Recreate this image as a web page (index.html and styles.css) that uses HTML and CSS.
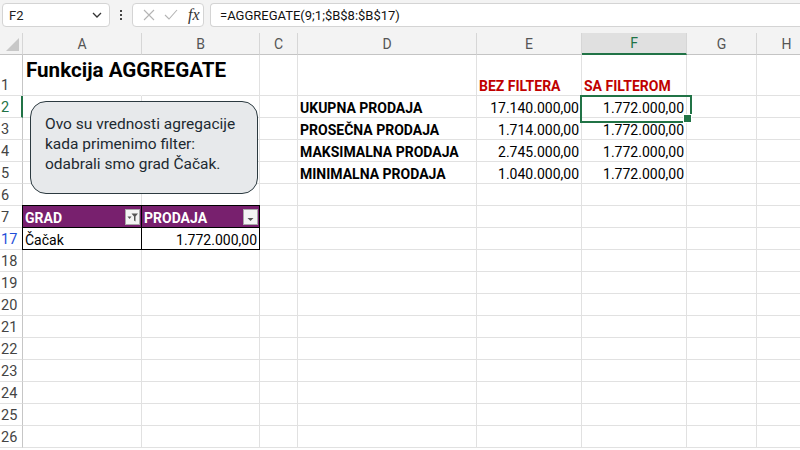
FILE: index.html
```html
<!DOCTYPE html>
<html lang="sr">
<head>
<meta charset="utf-8">
<title>Funkcija AGGREGATE</title>
<link rel="stylesheet" href="styles.css">
</head>
<body>
<div class="app">
  <div class="fbar">
    <div class="namebox"><span>F2</span>
      <svg class="chev" width="10" height="6" viewBox="0 0 10 6"><polyline points="1,1 5,5 9,1" fill="none" stroke="#333" stroke-width="1.3"/></svg>
    </div>
    <div class="dots"><i></i><i></i><i></i></div>
    <div class="fxbox">
      <svg width="12" height="12" viewBox="0 0 12 12"><path d="M1 1L11 11M11 1L1 11" stroke="#b4b4b4" stroke-width="1.1" fill="none"/></svg>
      <svg width="14" height="12" viewBox="0 0 14 12"><polyline points="1,6 5,10 13,1" fill="none" stroke="#b4b4b4" stroke-width="1.1"/></svg>
      <span class="fx">fx</span>
    </div>
    <div class="formula">=AGGREGATE(9;1;$B$8:$B$17)</div>
  </div>

  <div class="sheet">
    <div class="row hdr">
      <div class="c rh corner"><span class="tri"></span></div>
      <div class="c">A</div><div class="c">B</div><div class="c">C</div><div class="c">D</div>
      <div class="c">E</div><div class="c selcol">F</div><div class="c">G</div><div class="c">H</div>
    </div>
    <div class="row r1">
      <div class="c rh">1</div>
      <div class="c title nob">Funkcija AGGREGATE</div><div class="c"></div><div class="c"></div><div class="c"></div>
      <div class="c red">BEZ FILTERA</div><div class="c red">SA FILTEROM</div><div class="c"></div><div class="c"></div>
    </div>
    <div class="row">
      <div class="c rh selrow">2</div>
      <div class="c"></div><div class="c"></div><div class="c"></div>
      <div class="c b">UKUPNA PRODAJA</div><div class="c n">17.140.000,00</div><div class="c n sel">1.772.000,00</div><div class="c"></div><div class="c"></div>
    </div>
    <div class="row">
      <div class="c rh">3</div>
      <div class="c"></div><div class="c"></div><div class="c"></div>
      <div class="c b">PROSEČNA PRODAJA</div><div class="c n">1.714.000,00</div><div class="c n">1.772.000,00</div><div class="c"></div><div class="c"></div>
    </div>
    <div class="row">
      <div class="c rh">4</div>
      <div class="c"></div><div class="c"></div><div class="c"></div>
      <div class="c b">MAKSIMALNA PRODAJA</div><div class="c n">2.745.000,00</div><div class="c n">1.772.000,00</div><div class="c"></div><div class="c"></div>
    </div>
    <div class="row">
      <div class="c rh">5</div>
      <div class="c"></div><div class="c"></div><div class="c"></div>
      <div class="c b">MINIMALNA PRODAJA</div><div class="c n">1.040.000,00</div><div class="c n">1.772.000,00</div><div class="c"></div><div class="c"></div>
    </div>
    <div class="row">
      <div class="c rh">6</div>
      <div class="c"></div><div class="c"></div><div class="c"></div><div class="c"></div><div class="c"></div><div class="c"></div><div class="c"></div><div class="c"></div>
    </div>
    <div class="row">
      <div class="c rh">7</div>
      <div class="c th tl tt">GRAD
        <span class="fbtn"><svg width="13" height="14" viewBox="0 0 13 14"><path d="M1.5 6.5h4l-2 2.5z" fill="#555"/><path d="M5.5 3.5h6.5l-2.5 3v5l-1.5-1v-4z" fill="#555"/></svg></span>
      </div>
      <div class="c th tt">PRODAJA
        <span class="fbtn"><svg width="13" height="14" viewBox="0 0 13 14"><path d="M3.5 8h6l-3 3z" fill="#555"/></svg></span>
      </div>
      <div class="c"></div><div class="c"></div><div class="c"></div><div class="c"></div><div class="c"></div><div class="c"></div>
    </div>
    <div class="row">
      <div class="c rh blue">17</div>
      <div class="c td tl">Čačak</div><div class="c td n">1.772.000,00</div>
      <div class="c"></div><div class="c"></div><div class="c"></div><div class="c"></div><div class="c"></div><div class="c"></div>
    </div>
    <div class="row"><div class="c rh">18</div><div class="c"></div><div class="c"></div><div class="c"></div><div class="c"></div><div class="c"></div><div class="c"></div><div class="c"></div><div class="c"></div></div>
    <div class="row"><div class="c rh">19</div><div class="c"></div><div class="c"></div><div class="c"></div><div class="c"></div><div class="c"></div><div class="c"></div><div class="c"></div><div class="c"></div></div>
    <div class="row"><div class="c rh">20</div><div class="c"></div><div class="c"></div><div class="c"></div><div class="c"></div><div class="c"></div><div class="c"></div><div class="c"></div><div class="c"></div></div>
    <div class="row"><div class="c rh">21</div><div class="c"></div><div class="c"></div><div class="c"></div><div class="c"></div><div class="c"></div><div class="c"></div><div class="c"></div><div class="c"></div></div>
    <div class="row"><div class="c rh">22</div><div class="c"></div><div class="c"></div><div class="c"></div><div class="c"></div><div class="c"></div><div class="c"></div><div class="c"></div><div class="c"></div></div>
    <div class="row"><div class="c rh">23</div><div class="c"></div><div class="c"></div><div class="c"></div><div class="c"></div><div class="c"></div><div class="c"></div><div class="c"></div><div class="c"></div></div>
    <div class="row"><div class="c rh">24</div><div class="c"></div><div class="c"></div><div class="c"></div><div class="c"></div><div class="c"></div><div class="c"></div><div class="c"></div><div class="c"></div></div>
    <div class="row"><div class="c rh">25</div><div class="c"></div><div class="c"></div><div class="c"></div><div class="c"></div><div class="c"></div><div class="c"></div><div class="c"></div><div class="c"></div></div>
    <div class="row"><div class="c rh">26</div><div class="c"></div><div class="c"></div><div class="c"></div><div class="c"></div><div class="c"></div><div class="c"></div><div class="c"></div><div class="c"></div></div>
  </div>

  <div class="callout">Ovo su vrednosti agregacije kada primenimo filter: odabrali smo grad Čačak.</div>
</div>
</body>
</html>
```

FILE: styles.css
```css
* { box-sizing: border-box; margin: 0; padding: 0; }
html, body { width: 800px; height: 450px; overflow: hidden; background: #fff; }
body { font-family: Roboto, "Liberation Sans", sans-serif; color: #000; }

.app { position: relative; width: 800px; height: 450px; overflow: hidden; }

/* formula bar */
.fbar {
  height: 33px; background: #f3f3f3;
  display: flex; align-items: flex-start;
  padding: 3px 0 0 2px;
}
.namebox {
  width: 108px; height: 24px; background: #fff;
  border: 1px solid #d4d4d4; border-radius: 4px;
  display: flex; align-items: center; justify-content: space-between;
  padding: 0 7px 0 6px; font-size: 13px; color: #222;
}
.dots {
  width: 22px; height: 24px;
  display: flex; flex-direction: column; align-items: center; justify-content: center; gap: 2px;
}
.dots i { display: block; width: 2px; height: 2px; background: #444; }
.fxbox {
  width: 72px; height: 24px; background: #fff;
  border: 1px solid #d4d4d4; border-radius: 4px;
  display: flex; align-items: center; gap: 9px; padding-left: 10px;
}
.fx { font-family: "Liberation Serif", serif; font-style: italic; font-size: 16px; color: #333; margin-left: 1px; }
.formula {
  flex: 1; height: 24px; margin-left: 6px; background: #fff;
  border: 1px solid #d4d4d4; border-right: none; border-radius: 4px 0 0 4px;
  padding-left: 9px; font-size: 13px; color: #111;
  display: flex; align-items: center;
}

/* sheet */
.row {
  display: grid;
  grid-template-columns: 23px 119px 118px 38px 179px 105px 105px 70px 60px;
  height: 22px;
}
.row.r1 { height: 41px; }
.c {
  border-right: 1px solid #e1e1e1; border-bottom: 1px solid #e1e1e1;
  padding: 0 2px 1px 2px;
  display: flex; align-items: flex-end;
  font-size: 14px; white-space: nowrap; min-width: 0;
}
.hdr { height: 22px; background: #f3f3f3; }
.hdr .c {
  justify-content: center; align-items: center; padding: 0;
  color: #555; font-size: 14px;
  border-right-color: #d6d6d6; border-bottom-color: #c4c4c4;
}
.hdr .selcol { background: #e0e0e0; color: #217346; border-bottom: 2px solid #217346; }
.corner { position: relative; }
.tri {
  position: absolute; right: 3px; bottom: 3px;
  width: 0; height: 0;
  border-left: 13px solid transparent; border-bottom: 13px solid #c8c8c8;
}
.rh { color: #444; border-right-color: #c6c6c6; padding-left: 1px; font-size: 14.5px; }
.rh.selrow { color: #217346; border-right: 2px solid #217346; }
.rh.blue { color: #1f4fd8; }

.nob { border-right-color: transparent; }
.title { font-weight: 700; font-size: 20.6px; align-items: flex-start; padding: 3px 0 0 3px; overflow: visible; }
.red { color: #c00000; font-weight: 700; }
.b { font-weight: 700; }
.n { justify-content: flex-end; }

.sel { position: relative; }
.sel::before {
  content: ""; position: absolute; left: -2px; top: -1px;
  width: 108px; height: 24px; border: 2px solid #217346;
}
.sel::after {
  content: ""; position: absolute; left: 101px; top: 18px;
  width: 7px; height: 7px; background: #217346; border: 1px solid #fff;
}

/* table */
.th {
  background: #78206e; color: #fff; font-weight: 700;
  justify-content: space-between;
  border-right-color: #000; border-bottom-color: #000;
  padding-right: 1px;
}
.td { border-right-color: #000; border-bottom-color: #000; }
.tl { box-shadow: -1px 0 0 #000; }
.tt { box-shadow: 0 -1px 0 #000; }
.tl.tt { box-shadow: -1px 0 0 #000, 0 -1px 0 #000, -1px -1px 0 #000; }
.fbtn {
  width: 15px; height: 16px; margin-bottom: 1px;
  background: #f4f4f4; border: 1px solid #a8a8a8;
  display: flex; align-items: center; justify-content: center;
}
.fbtn svg { display: block; }

/* callout shape */
.callout {
  position: absolute; left: 30px; top: 101px;
  width: 228px; height: 93px;
  background: #e7e9eb; border: 1.5px solid #2c3a40; border-radius: 16px;
  padding: 12px 10px 0 14px;
  font-size: 15.5px; line-height: 20px; color: #1d2a31;
}
```
